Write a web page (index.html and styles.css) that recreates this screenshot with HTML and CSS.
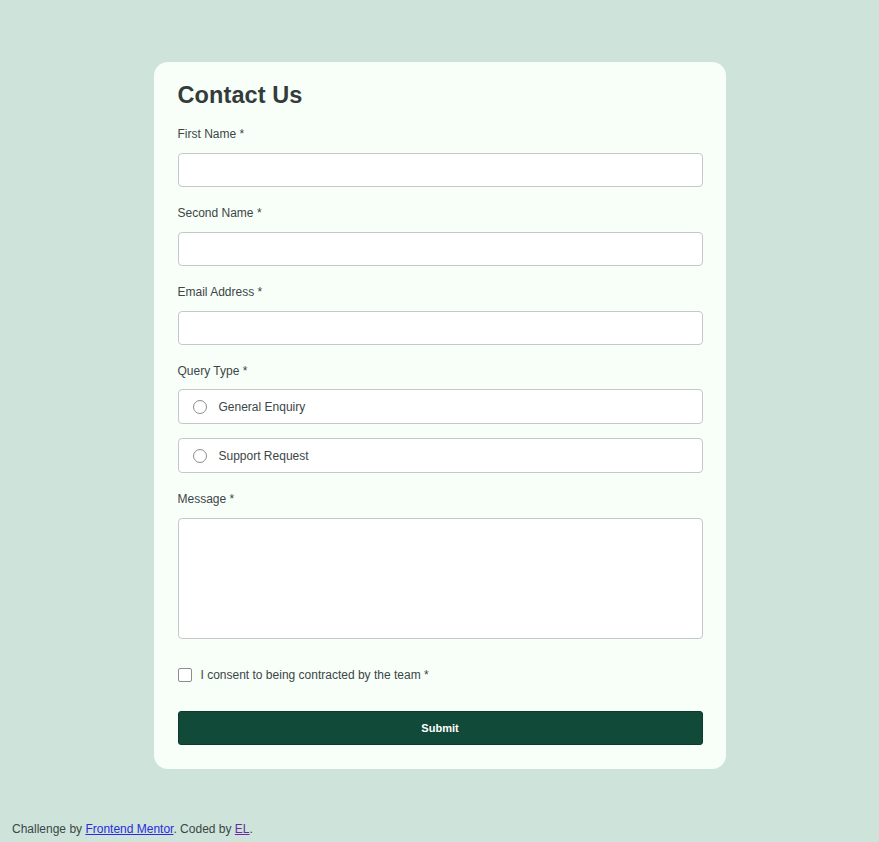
FILE: index.html
```html
<!DOCTYPE html>
<html lang="en">
<head>
<meta charset="utf-8">
<title>Contact Us</title>
<link rel="stylesheet" href="styles.css">
</head>
<body>
<main class="card">
  <h1 class="title">Contact Us</h1>
  <form class="form">
    <div class="field">
      <label class="label" for="fn">First Name *</label>
      <input class="input" id="fn" type="text">
    </div>
    <div class="field">
      <label class="label" for="sn">Second Name *</label>
      <input class="input" id="sn" type="text">
    </div>
    <div class="field">
      <label class="label" for="em">Email Address *</label>
      <input class="input" id="em" type="email">
    </div>
    <div class="field">
      <span class="label label-tight">Query Type *</span>
      <div class="radios">
        <label class="radio-box"><span class="radio"></span><span>General Enquiry</span></label>
        <label class="radio-box"><span class="radio"></span><span>Support Request</span></label>
      </div>
    </div>
    <div class="field">
      <label class="label" for="msg">Message *</label>
      <textarea class="textarea" id="msg"></textarea>
    </div>
    <label class="consent"><span class="check"></span><span>I consent to being contracted by the team *</span></label>
    <button class="submit" type="button">Submit</button>
  </form>
</main>
<footer class="footer">Challenge by <a href="#" class="link">Frontend Mentor</a>. Coded by <a href="#" class="link visited">EL</a>.</footer>
</body>
</html>
```
FILE: styles.css
```css
* { box-sizing: border-box; }
html, body { margin: 0; padding: 0; }
body {
  background: #cee4da;
  font-family: "Liberation Sans", Arial, sans-serif;
  color: #2b3a3a;
  min-height: 842px;
  padding-top: 62px;
}
.card {
  width: 572px;
  margin: 0 auto;
  background: #f8fff9;
  border-radius: 14px;
  padding: 19px 23px 24px 24px;
}
.title {
  margin: 0;
  font-size: 23.5px;
  line-height: 28px;
  font-weight: 700;
  color: #343b3b;
  letter-spacing: 0.1px;
}
.form {
  display: flex;
  flex-direction: column;
  margin-top: 17px;
}
.field {
  display: flex;
  flex-direction: column;
  margin-bottom: 18px;
}
.label {
  font-size: 12px;
  line-height: 16px;
  color: #3c4646;
  margin-bottom: 11px;
}
.label-tight { margin-bottom: 10px; }
.input {
  height: 34px;
  border: 1px solid #c4c8c6;
  border-radius: 4px;
  background: #fff;
  font: inherit;
}
.radios {
  display: flex;
  flex-direction: column;
  gap: 14px;
}
.radio-box {
  height: 35px;
  border: 1px solid #c4c8c6;
  border-radius: 4px;
  background: #fff;
  display: flex;
  align-items: center;
  padding-left: 14px;
  gap: 12px;
  font-size: 12px;
  color: #3c4646;
}
.radio {
  width: 14px;
  height: 14px;
  border: 1px solid #8a8e8c;
  border-radius: 50%;
  background: #fff;
}
.textarea {
  height: 121px;
  border: 1px solid #c4c8c6;
  border-radius: 4px;
  background: #fff;
  resize: none;
  font: inherit;
}
.consent {
  display: flex;
  align-items: center;
  gap: 9px;
  font-size: 12px;
  color: #3c4646;
  margin-top: 11px;
}
.check {
  width: 14px;
  height: 14px;
  border: 1px solid #8a8e8c;
  border-radius: 2px;
  background: #fff;
}
.submit {
  margin-top: 29px;
  height: 34px;
  border: 1px solid #0e3a2e;
  border-radius: 3px;
  background: #124a3a;
  color: #fff;
  font-family: inherit;
  font-size: 11px;
  font-weight: 700;
}
.footer {
  margin-top: 52px;
  padding-left: 12px;
  font-size: 12px;
  line-height: 16px;
  color: #3c4646;
}
.link { color: #2a2ae0; }
.link.visited { color: #6a2aa0; }
```
